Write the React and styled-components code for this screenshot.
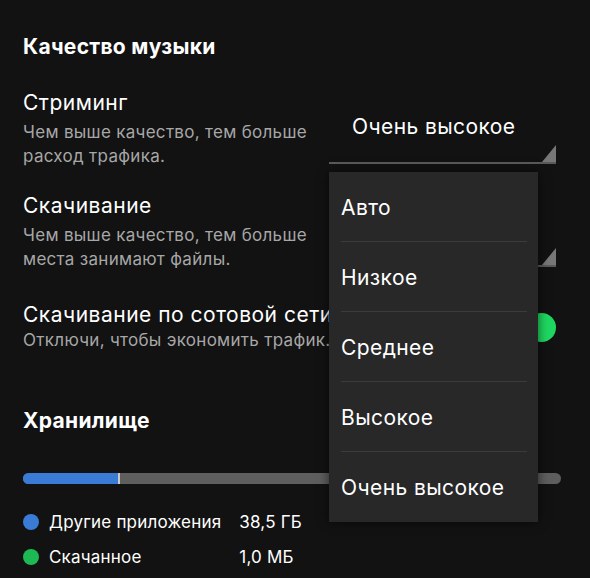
import React from "react";
import styled, { createGlobalStyle } from "styled-components";

const GlobalStyle = createGlobalStyle`
  body {
    margin: 0;
    background: #121212;
    font-family: Inter, "Noto Sans", "Liberation Sans", sans-serif;
    color: #fff;
  }
`;

const Page = styled.div`
  width: 590px;
  height: 578px;
  overflow: hidden;
  box-sizing: border-box;
  padding: 34px 29px 0 23px;
  background: #121212;
`;

const SectionTitle = styled.h2`
  margin: 0 0 ${(p) => p.$gap}px;
  font-size: 21px;
  line-height: 26px;
  font-weight: 700;
  letter-spacing: 0.3px;
`;

const Row = styled.div`
  display: flex;
  align-items: ${(p) => (p.$center ? "center" : "flex-start")};
  justify-content: space-between;
  padding-right: 5px;
  margin-bottom: ${(p) => p.$gap}px;
  position: relative;
  z-index: ${(p) => p.$z || 0};
`;

const Info = styled.div`
  flex: 1;
  min-width: 0;
  white-space: ${(p) => (p.$nowrap ? "nowrap" : "normal")};
  padding-right: ${(p) => (p.$nowrap ? 0 : 22)}px;
`;

const Label = styled.div`
  font-size: 21px;
  line-height: 26px;
  letter-spacing: 0.5px;
  margin-bottom: ${(p) => (p.$tight ? 0 : 4)}px;
`;

const Hint = styled.div`
  font-size: 17px;
  line-height: 24px;
  letter-spacing: 0.3px;
  color: #a7a7a7;
`;

const Select = styled.div`
  position: relative;
  width: 227px;
  flex-shrink: 0;
  box-sizing: border-box;
  padding: 24px 0 22px 23px;
  font-size: 21px;
  line-height: 26px;
  letter-spacing: 0.4px;
  border-bottom: 2px solid #5a5a5a;

  &::after {
    content: "";
    position: absolute;
    right: 0;
    bottom: 0;
    width: 0;
    height: 0;
    border-left: 14px solid transparent;
    border-bottom: 17px solid #777;
  }
`;

const Menu = styled.ul`
  position: absolute;
  left: 0;
  top: calc(100% + 10px);
  width: 209px;
  margin: 0;
  padding: 0;
  list-style: none;
  background: #282828;
  box-shadow: 0 0 10px rgba(0, 0, 0, 0.6);
`;

const MenuItem = styled.li`
  height: 70px;
  box-sizing: border-box;
  display: flex;
  align-items: center;
  padding: 2px 0 0 12px;
  font-size: 21px;
  letter-spacing: 0.4px;
  position: relative;

  & + &::before {
    content: "";
    position: absolute;
    top: -1px;
    left: 12px;
    right: 11px;
    height: 1px;
    background: #3b3b3b;
  }
`;

const Switch = styled.div`
  position: relative;
  width: 50px;
  height: 29px;
  flex-shrink: 0;

  &::before {
    content: "";
    position: absolute;
    left: 4px;
    right: 6px;
    top: 8px;
    height: 13px;
    border-radius: 7px;
    background: #1a6a3a;
  }

  &::after {
    content: "";
    position: absolute;
    right: 0;
    top: 0;
    width: 29px;
    height: 29px;
    border-radius: 50%;
    background: #1ed760;
  }
`;

const Bar = styled.div`
  display: flex;
  height: 11px;
  margin-bottom: 30px;
  border-radius: 6px;
  overflow: hidden;
  background: #5e5e5e;
`;

const BarFill = styled.div`
  background: #3a7bd5;
  border-right: 2px solid #c8c8c8;
`;

const Legend = styled.div`
  display: grid;
  grid-template-columns: 16px max-content max-content;
  column-gap: 10px;
  row-gap: 19px;
  align-items: center;
  font-size: 17px;
  line-height: 16px;
  letter-spacing: 0.2px;
`;

const Dot = styled.span`
  width: 16px;
  height: 16px;
  border-radius: 50%;
  background: ${(p) => p.$color};
`;

const Value = styled.span`
  margin-left: 8px;
`;

const options = ["Авто", "Низкое", "Среднее", "Высокое", "Очень высокое"];

export default function App() {
  return (
    <>
      <GlobalStyle />
      <Page>
        <SectionTitle $gap={30}>Качество музыки</SectionTitle>

        <Row $gap={25} $z={2}>
          <Info>
            <Label>Стриминг</Label>
            <Hint>Чем выше качество, тем больше расход трафика.</Hint>
          </Info>
          <Select>
            Очень высокое
            <Menu>
              {options.map((o) => (
                <MenuItem key={o}>{o}</MenuItem>
              ))}
            </Menu>
          </Select>
        </Row>

        <Row $gap={31}>
          <Info>
            <Label>Скачивание</Label>
            <Hint>Чем выше качество, тем больше места занимают файлы.</Hint>
          </Info>
          <Select>Очень высокое</Select>
        </Row>

        <Row $gap={56} $center>
          <Info $nowrap>
            <Label $tight>Скачивание по сотовой сети</Label>
            <Hint>Отключи, чтобы экономить трафик.</Hint>
          </Info>
          <Switch />
        </Row>

        <SectionTitle $gap={39}>Хранилище</SectionTitle>

        <Bar>
          <BarFill style={{ width: `${(95 / 538) * 100}%` }} />
        </Bar>

        <Legend>
          <Dot $color="#3a7bd5" />
          <span>Другие приложения</span>
          <Value>38,5 ГБ</Value>
          <Dot $color="#1db954" />
          <span>Скачанное</span>
          <Value>1,0 МБ</Value>
        </Legend>
      </Page>
    </>
  );
}
